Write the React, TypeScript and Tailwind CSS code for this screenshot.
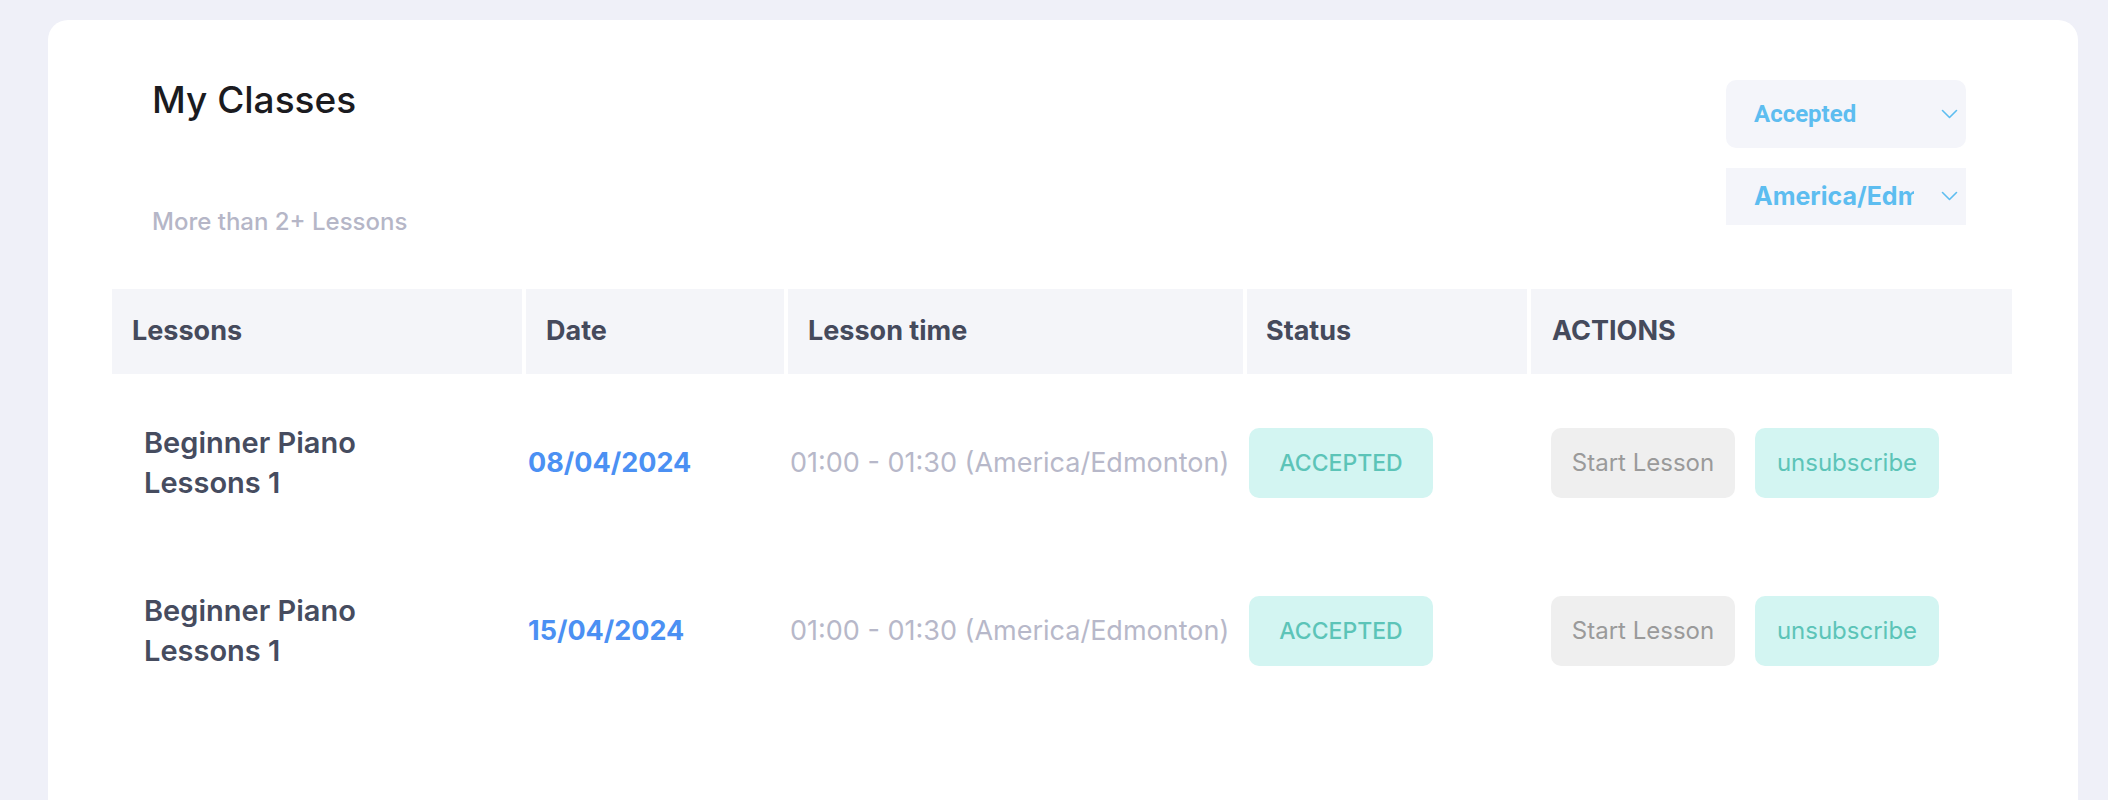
import React from "react";

const Chevron = () => (
  <svg width="17" height="11" viewBox="0 0 17 11" fill="none" className="shrink-0">
    <polyline points="1.5,1.5 8.5,8.5 15.5,1.5" stroke="#5dbdf0" strokeWidth="1.6" strokeLinecap="round" strokeLinejoin="round" />
  </svg>
);

const rows = [
  { date: "08/04/2024" },
  { date: "15/04/2024" },
];

export default function App() {
  return (
    <div
      className="min-h-[800px] w-[2108px] overflow-hidden bg-[#eff0f8] pt-[20px] pl-[48px] pr-[30px]"
      style={{ fontFamily: "Inter, 'Open Sans', sans-serif" }}
    >
      <div className="min-h-[800px] rounded-t-[20px] bg-white pl-[64px] pr-[66px] pt-[60px]">
        {/* header */}
        <div className="flex items-start justify-between">
          <div className="pl-[40px]">
            <div className="text-[37px] leading-[40px] font-medium text-[#1b1b1f]">My Classes</div>
            <div className="mt-[87px] text-[24px] leading-[30px] font-medium text-[#b5b6c7]">More than 2+ Lessons</div>
          </div>
          <div className="mr-[46px] flex flex-col gap-[20px]">
            <div className="flex h-[68px] w-[240px] items-center justify-between rounded-[10px] bg-[#f4f5fa] pl-[28px] pr-[8px]">
              <span
                className="text-[24px] font-bold text-[#5dbdf0]"
                style={{ fontFamily: "Roboto, sans-serif" }}
              >
                Accepted
              </span>
              <Chevron />
            </div>
            <div className="flex h-[57px] w-[240px] items-center justify-between bg-[#f4f5fa] pl-[28px] pr-[8px]">
              <span className="block w-[160px] overflow-hidden whitespace-nowrap text-[25px] font-bold text-[#5dbdf0]">
                America/Edmonton
              </span>
              <Chevron />
            </div>
          </div>
        </div>

        {/* table header */}
        <div className="mt-[52px] grid h-[85px] grid-cols-[410px_258px_455px_280px_481px] gap-x-[4px] text-[27px] font-bold text-[#454a5c]">
          <div className="flex items-center bg-[#f4f5f9] pl-[20px]">Lessons</div>
          <div className="flex items-center bg-[#f4f5f9] pl-[20px]">Date</div>
          <div className="flex items-center bg-[#f4f5f9] pl-[20px]">Lesson time</div>
          <div className="flex items-center bg-[#f4f5f9] pl-[19px]">Status</div>
          <div className="flex items-center bg-[#f4f5f9] pl-[21px]">ACTIONS</div>
        </div>

        {/* rows */}
        <div className="mt-[49px] flex flex-col gap-[98px]">
          {rows.map((r) => (
            <div
              key={r.date}
              className="grid h-[70px] grid-cols-[410px_258px_455px_280px_481px] items-center gap-x-[4px]"
            >
              <div className="pl-[32px] text-[29px] leading-[40px] font-semibold text-[#464c5f]">
                Beginner Piano
                <br />
                Lessons 1
              </div>
              <div className="pl-[2px] text-[27px] font-bold text-[#4b90f3]">{r.date}</div>
              <div className="whitespace-nowrap pl-[2px] text-[27px] text-[#b7b8c9]">
                01:00 - 01:30 (America/Edmonton)
              </div>
              <div className="pl-[2px]">
                <div className="flex h-[70px] w-[184px] items-center justify-center rounded-[10px] bg-[#d3f5f2] text-[23px] font-medium text-[#5cc4b8]">
                  ACCEPTED
                </div>
              </div>
              <div className="flex items-center gap-[20px] pl-[20px]">
                <div className="flex h-[70px] w-[184px] items-center justify-center rounded-[10px] bg-[#efefef] text-[24px] text-[#9a9a9a]">
                  Start Lesson
                </div>
                <div className="flex h-[70px] w-[184px] items-center justify-center rounded-[10px] bg-[#d3f5f2] text-[24px] text-[#5cc4b8]">
                  unsubscribe
                </div>
              </div>
            </div>
          ))}
        </div>
      </div>
    </div>
  );
}
